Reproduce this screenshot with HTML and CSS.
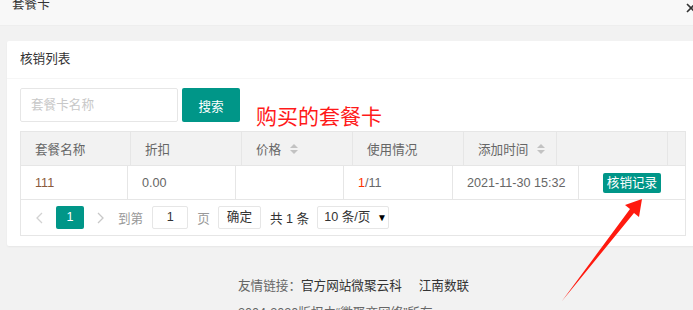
FILE: index.html
```html
<!DOCTYPE html>
<html lang="zh-CN">
<head>
    <meta charset="UTF-8">
    <meta name="viewport" content="width=device-width, initial-scale=1.0">
    <title>套餐卡</title>
    <link rel="stylesheet" href="styles.css">
</head>
<body>

<div class="dialog-title">
    <span>套餐卡</span>
    <svg class="close-icon" width="10" height="10" viewBox="0 0 10 10">
        <path d="M1 1 L9 9 M9 1 L1 9" stroke="#333" stroke-width="1.6" fill="none"/>
    </svg>
</div>

<div class="main">
    <div class="card">
        <div class="card-header">核销列表</div>
        <div class="card-body">
            <div class="search-row">
                <input class="search-input" type="text" placeholder="套餐卡名称">
                <button class="btn">搜索</button>
            </div>

            <div class="table-box">
                <div class="thead">
                    <div class="th">套餐名称</div>
                    <div class="th">折扣</div>
                    <div class="th">价格 <span class="sort"><i class="up"></i><i class="down"></i></span></div>
                    <div class="th">使用情况</div>
                    <div class="th">添加时间 <span class="sort"><i class="up"></i><i class="down"></i></span></div>
                    <div class="th"></div>
                    <div class="th gutter"></div>
                </div>
                <div class="tbody">
                    <div class="td name">111</div>
                    <div class="td">0.00</div>
                    <div class="td"></div>
                    <div class="td"><span class="used">1</span>/11</div>
                    <div class="td">2021-11-30 15:32</div>
                    <div class="td center"><span class="btn-xs">核销记录</span></div>
                </div>
                <div class="pager">
                    <svg class="pg-arrow" width="8" height="12" viewBox="0 0 8 12"><path d="M7 1 L2 6 L7 11" stroke="#d2d2d2" stroke-width="1.3" fill="none"/></svg>
                    <span class="pg-cur">1</span>
                    <svg class="pg-arrow next" width="8" height="12" viewBox="0 0 8 12"><path d="M1 1 L6 6 L1 11" stroke="#c8c8c8" stroke-width="1.3" fill="none"/></svg>
                    <span class="pg-text">到第</span>
                    <span class="pg-input">1</span>
                    <span class="pg-text page">页</span>
                    <span class="pg-btn">确定</span>
                    <span class="pg-count">共 1 条</span>
                    <span class="pg-select">10 条/页 <b>▼</b></span>
                </div>
            </div>
        </div>
    </div>

    <div class="footer">
        <p>友情链接：<a href="#">官方网站微聚云科</a><a href="#" class="gap">江南数联</a></p>
        <p class="copy">2004-2020版权由“微聚商网络”所有</p>
    </div>
</div>

<div class="note">购买的套餐卡</div>
<svg class="arrow" width="95" height="110" viewBox="555 195 95 110">
    <polygon points="642,199 625,205 630,209 562,301 634,213 639,217" fill="#ff1a0f"/>
</svg>

</body>
</html>
```

FILE: styles.css
```css
body {
    margin: 0;
    background: #f2f2f2;
    font-family: 'Liberation Sans', 'Noto Sans CJK SC', sans-serif;
    font-size: 12.6px;
    color: #666;
    overflow: hidden;
    position: relative;
    height: 310px;
}

.dialog-title {
    height: 26px;
    background: #f8f8f8;
    border-bottom: 1px solid #eee;
    box-sizing: border-box;
    display: flex;
    justify-content: space-between;
    align-items: flex-start;
    padding-left: 12px;
    color: #333;
    line-height: 8px;
}

.close-icon {
    margin-top: 3px;
    margin-right: -3px;
}

.main {
    padding: 15px 0 0 7px;
}

.card {
    width: 691px;
    background: #fff;
    border-radius: 2px;
    box-shadow: 0 1px 2px rgba(0, 0, 0, 0.05);
}

.card-header {
    height: 37px;
    line-height: 37px;
    padding-left: 13px;
    color: #333;
    border-bottom: 1px solid #f6f6f6;
}

.card-body {
    padding: 9px 13px 10px 13px;
}

.search-row {
    display: flex;
    gap: 4px;
    margin-bottom: 9px;
}

.search-input {
    width: 158px;
    height: 34px;
    box-sizing: border-box;
    border: 1px solid #e6e6e6;
    border-radius: 2px;
    padding: 0 10px;
    font-family: inherit;
    font-size: 12.6px;
    outline: none;
}

.search-input::placeholder {
    color: #c8c8c8;
}

.btn {
    width: 58px;
    height: 34px;
    border: none;
    border-radius: 2px;
    background: #009688;
    color: #fff;
    font-family: inherit;
    font-size: 12.6px;
}

.table-box {
    width: 666px;
    border: 1px solid #e6e6e6;
    box-sizing: border-box;
}

.thead {
    display: grid;
    grid-template-columns: 110px 111px 111px 111px 93px 111px 1fr;
    background: #f2f2f2;
    border-bottom: 1px solid #e6e6e6;
}

.th, .td {
    height: 33px;
    display: flex;
    align-items: center;
    padding-left: 14px;
    border-right: 1px solid #e6e6e6;
    white-space: nowrap;
}

.th.gutter, .td:last-child {
    border-right: none;
}

.sort {
    display: inline-flex;
    flex-direction: column;
    gap: 2px;
    margin-left: 9px;
}

.sort i {
    width: 0;
    height: 0;
    border-left: 4px solid transparent;
    border-right: 4px solid transparent;
}

.sort .up {
    border-bottom: 4px solid #c2c2c2;
}

.sort .down {
    border-top: 4px solid #c2c2c2;
}

.tbody {
    display: grid;
    grid-template-columns: 107px 108px 108px 109px 126px 1fr;
    border-bottom: 1px solid #e6e6e6;
}

.td.name {
    color: #8a5a3c;
}

.td.center {
    justify-content: center;
    padding-left: 0;
}

.used {
    color: #ff3300;
}

.btn-xs {
    background: #009688;
    color: #fff;
    height: 20px;
    line-height: 20px;
    padding: 0 4px;
    border-radius: 2px;
}

.pager {
    height: 35px;
    display: flex;
    align-items: center;
    padding-left: 14px;
}

.pg-arrow {
    margin-right: 13px;
}

.pg-cur {
    width: 28px;
    height: 23px;
    line-height: 23px;
    text-align: center;
    background: #009688;
    color: #fff;
    border-radius: 2px;
    margin-right: 13px;
}

.pg-text {
    color: #999;
    margin-right: 9px;
}

.pg-text.page {
    margin-right: 8px;
}

.pg-input {
    width: 36px;
    height: 23px;
    line-height: 21px;
    box-sizing: border-box;
    border: 1px solid #e6e6e6;
    border-radius: 2px;
    text-align: center;
    color: #333;
    margin-right: 9px;
}

.pg-btn {
    height: 23px;
    line-height: 21px;
    box-sizing: border-box;
    border: 1px solid #e6e6e6;
    border-radius: 2px;
    padding: 0 8px;
    color: #333;
    margin-right: 9px;
}

.pg-count {
    color: #333;
    margin-right: 8px;
}

.pg-select {
    width: 72px;
    height: 23px;
    line-height: 21px;
    box-sizing: border-box;
    border: 1px solid #e6e6e6;
    border-radius: 2px;
    padding-left: 6px;
    color: #333;
}

.pg-select b {
    font-size: 10px;
    margin-left: 3px;
    font-weight: normal;
    color: #000;
}

.footer {
    padding: 28px 0 0 231px;
}

.footer p {
    margin: 0;
    line-height: 24px;
}

.footer p.copy {
    margin-top: 3px;
}

.footer a {
    color: #333;
    text-decoration: none;
}

.footer a.gap {
    margin-left: 17px;
}

.note {
    position: absolute;
    left: 256px;
    top: 102px;
    font-size: 21px;
    line-height: 26px;
    color: #ff1a1a;
    font-family: 'Noto Sans CJK SC', sans-serif;
}

.arrow {
    position: absolute;
    left: 555px;
    top: 195px;
}
```
